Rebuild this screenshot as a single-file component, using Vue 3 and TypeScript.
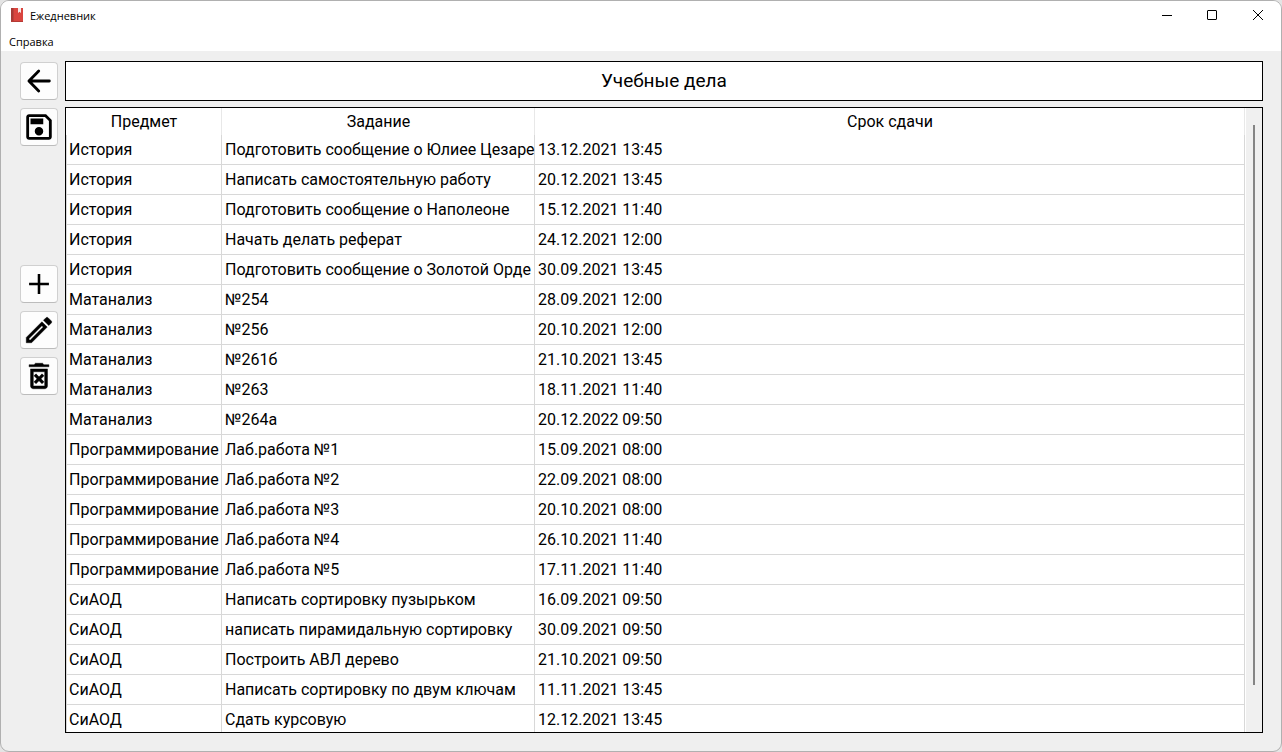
<script setup lang="ts">
import { ref } from 'vue'

interface Task {
  subject: string
  title: string
  due: string
}

const tasks = ref<Task[]>([
  { subject: 'История', title: 'Подготовить сообщение о Юлиее Цезаре', due: '13.12.2021 13:45' },
  { subject: 'История', title: 'Написать самостоятельную работу', due: '20.12.2021 13:45' },
  { subject: 'История', title: 'Подготовить сообщение о Наполеоне', due: '15.12.2021 11:40' },
  { subject: 'История', title: 'Начать делать реферат', due: '24.12.2021 12:00' },
  { subject: 'История', title: 'Подготовить сообщение о Золотой Орде', due: '30.09.2021 13:45' },
  { subject: 'Матанализ', title: '№254', due: '28.09.2021 12:00' },
  { subject: 'Матанализ', title: '№256', due: '20.10.2021 12:00' },
  { subject: 'Матанализ', title: '№261б', due: '21.10.2021 13:45' },
  { subject: 'Матанализ', title: '№263', due: '18.11.2021 11:40' },
  { subject: 'Матанализ', title: '№264а', due: '20.12.2022 09:50' },
  { subject: 'Программирование', title: 'Лаб.работа №1', due: '15.09.2021 08:00' },
  { subject: 'Программирование', title: 'Лаб.работа №2', due: '22.09.2021 08:00' },
  { subject: 'Программирование', title: 'Лаб.работа №3', due: '20.10.2021 08:00' },
  { subject: 'Программирование', title: 'Лаб.работа №4', due: '26.10.2021 11:40' },
  { subject: 'Программирование', title: 'Лаб.работа №5', due: '17.11.2021 11:40' },
  { subject: 'СиАОД', title: 'Написать сортировку пузырьком', due: '16.09.2021 09:50' },
  { subject: 'СиАОД', title: 'написать пирамидальную сортировку', due: '30.09.2021 09:50' },
  { subject: 'СиАОД', title: 'Построить АВЛ дерево', due: '21.10.2021 09:50' },
  { subject: 'СиАОД', title: 'Написать сортировку по двум ключам', due: '11.11.2021 13:45' },
  { subject: 'СиАОД', title: 'Сдать курсовую', due: '12.12.2021 13:45' },
])
</script>

<template>
  <div class="window">
    <header class="titlebar">
      <svg class="app-icon" viewBox="0 0 14 16" aria-hidden="true">
        <rect x="1" y="1" width="12" height="14" fill="#d9453f" />
        <rect x="1" y="1" width="2.500" height="14" fill="#a63a36" />
        <rect x="1" y="14" width="12" height="1" fill="#b53a35" />
        <path d="M8 1h3v5L9.500 4.800 8 6z" fill="#f8e9e7" />
      </svg>
      <span class="app-name">Ежедневник</span>
      <div class="window-controls">
        <button type="button" aria-label="Свернуть">
          <svg viewBox="0 0 12 12"><path d="M2 6.500h10" /></svg>
        </button>
        <button type="button" aria-label="Развернуть">
          <svg viewBox="0 0 12 12"><rect x="1.500" y="1.500" width="9" height="9" rx="0.500" /></svg>
        </button>
        <button type="button" aria-label="Закрыть">
          <svg viewBox="0 0 12 12"><path d="M1 1l10 10M11 1L1 11" /></svg>
        </button>
      </div>
    </header>

    <nav class="menubar">
      <button type="button">Справка</button>
    </nav>

    <main class="content">
      <aside class="toolbar">
        <div class="tool-group">
          <button type="button" aria-label="Назад">
            <svg viewBox="0 0 24 24"><path class="line" d="M19.300 12H5M11.800 5L4.900 12l6.900 7" /></svg>
          </button>
          <button type="button" aria-label="Сохранить">
            <svg viewBox="0 0 24 24"><path d="M17 3H5c-1.110 0-2 .9-2 2v14c0 1.100.89 2 2 2h14c1.100 0 2-.9 2-2V7l-4-4zm2 16H5V5h11.170L19 7.830V19zm-7-7c-1.660 0-3 1.340-3 3s1.340 3 3 3 3-1.340 3-3-1.340-3-3-3zM6 6h9v4H6z" /></svg>
          </button>
        </div>
        <div class="tool-group">
          <button type="button" aria-label="Добавить">
            <svg viewBox="0 0 24 24"><path d="M19 12.900h-6.100V19h-1.800v-6.100H5v-1.800h6.100V5h1.800v6.100H19z" /></svg>
          </button>
          <button type="button" aria-label="Изменить">
            <svg viewBox="0 0 24 24"><path class="soft" d="M3 17.250V21h3.750L17.810 9.940l-3.750-3.750L3 17.250zM5.920 19H5v-.92l9.060-9.060.92.92L5.920 19zM20.710 5.630l-2.340-2.340a1 1 0 0 0-1.410 0l-1.830 1.830 3.750 3.750 1.830-1.830a1 1 0 0 0 0-1.410z" /></svg>
          </button>
          <button type="button" aria-label="Удалить">
            <svg viewBox="0 0 24 24"><path class="soft" d="M14.120 10.470L12 12.590l-2.130-2.120-1.410 1.410L10.590 14l-2.120 2.120 1.410 1.410L12 15.410l2.120 2.120 1.410-1.410L13.410 14l2.120-2.120zM15.500 4l-1-1h-5l-1 1H5v1.500h14V4zM6 19c0 1.100.9 2 2 2h8c1.100 0 2-.9 2-2V7H6v12zM8 9h8v10H8V9z" /></svg>
          </button>
        </div>
      </aside>

      <section class="workspace">
        <h1 class="heading">Учебные дела</h1>
        <div class="table-frame">
          <div class="table-view">
            <table>
              <colgroup>
                <col class="col-subject" />
                <col class="col-title" />
                <col />
              </colgroup>
              <thead>
                <tr>
                  <th scope="col">Предмет</th>
                  <th scope="col">Задание</th>
                  <th scope="col">Срок сдачи</th>
                </tr>
              </thead>
              <tbody>
                <tr v-for="(task, index) in tasks" :key="index">
                  <td>{{ task.subject }}</td>
                  <td>{{ task.title }}</td>
                  <td>{{ task.due }}</td>
                </tr>
              </tbody>
            </table>
          </div>
          <div class="scrollbar"><div class="thumb"></div></div>
        </div>
      </section>
    </main>
  </div>
</template>

<style>
body {
  margin: 0;
  background: #e4e4e4;
}
</style>

<style scoped>
.window {
  box-sizing: border-box;
  display: flex;
  flex-direction: column;
  height: 100vh;
  border: 1px solid #b0b0b0;
  border-radius: 9px;
  overflow: hidden;
  background: #efefef;
  color: #000;
  font-family: Roboto, "Liberation Sans", sans-serif;
  font-size: 16px;
}

button {
  padding: 0;
  border: 0;
  background: none;
  color: inherit;
  font: inherit;
}

.titlebar {
  display: flex;
  align-items: center;
  height: 28px;
  padding-left: 9px;
  background: #fff;
  font-family: "Open Sans", "Noto Sans", sans-serif;
  font-size: 11px;
}

.app-icon {
  width: 14px;
  height: 16px;
  margin-right: 6px;
}

.window-controls {
  display: flex;
  align-self: stretch;
  margin-left: auto;
}

.window-controls button {
  display: flex;
  align-items: center;
  justify-content: center;
  width: 46px;
}

.window-controls svg {
  width: 12px;
  height: 12px;
  fill: none;
  stroke: #000;
}

.menubar {
  box-sizing: border-box;
  display: flex;
  height: 22px;
  padding: 3px 8px 0;
  background: #fff;
  font-family: "Open Sans", "Noto Sans", sans-serif;
  font-size: 11px;
}

.content {
  display: flex;
  flex: 1;
  gap: 7px;
  min-height: 0;
  padding: 10px 18px 18px 19px;
}

.toolbar {
  display: flex;
  flex-direction: column;
  gap: 119px;
  padding-top: 1px;
}

.tool-group {
  display: flex;
  flex-direction: column;
  gap: 8px;
}

.toolbar button {
  box-sizing: border-box;
  display: flex;
  align-items: center;
  justify-content: center;
  width: 38px;
  height: 38px;
  border: 1px solid #d0d0d0;
  border-bottom-color: #bcbcbc;
  border-radius: 4px;
  background: #fdfdfd;
}

.toolbar svg {
  flex: none;
  width: 34px;
  height: 34px;
}

.toolbar .line {
  fill: none;
  stroke: #000;
  stroke-width: 2;
  stroke-linecap: round;
  stroke-linejoin: round;
}

.toolbar .soft {
  stroke: #000;
  stroke-width: 0.3;
  stroke-linejoin: round;
}

.workspace {
  display: flex;
  flex: 1;
  flex-direction: column;
  gap: 6px;
  min-width: 0;
}

.heading {
  box-sizing: border-box;
  height: 40px;
  margin: 0;
  border: 1px solid #000;
  background: #fff;
  font-size: 19px;
  font-weight: 400;
  line-height: 38px;
  text-align: center;
}

.table-frame {
  display: flex;
  flex: 1;
  min-height: 0;
  border: 1px solid #000;
  background: #fff;
}

.table-view {
  flex: 1;
  min-width: 0;
  margin-right: 1px;
  overflow: hidden;
}

table {
  width: 100%;
  border-spacing: 0;
  table-layout: fixed;
}

.col-subject {
  width: 156px;
}

.col-title {
  width: 313px;
}

th,
td {
  box-sizing: border-box;
  padding: 0 2px 0 3px;
  font-weight: 400;
  white-space: nowrap;
}

th {
  height: 27px;
  border-right: 1px solid #e8e8e8;
}

td {
  height: 30px;
  border-right: 1px solid #d8d8d8;
  border-bottom: 1px solid #d8d8d8;
}

td:first-child {
  border-left: 1px solid #d8d8d8;
  padding-left: 2px;
}

.scrollbar {
  display: flex;
  justify-content: center;
  width: 16px;
  padding: 17px 0 47px;
  background: #f0f0f0;
}

.thumb {
  width: 2px;
  background: #858585;
}
</style>
